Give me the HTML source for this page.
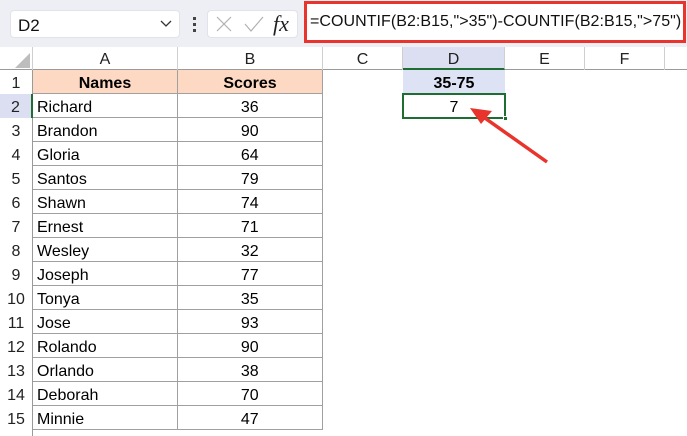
<!DOCTYPE html>
<html><head><style>
*{margin:0;padding:0;box-sizing:border-box}
body{width:687px;height:436px;overflow:hidden;background:#fff;font-family:"Liberation Sans",Calibri,sans-serif;position:relative}
.a{position:absolute}
.tb{left:0;top:0;width:687px;height:47px;background:#eeeef5}
.box{background:#fff;border:1px solid #e2e2ea;border-radius:4px}
.hdr{top:47px;height:23px;background:#fff;border-bottom:1px solid #9a9a9a;font-size:16px;color:#222;text-align:center;line-height:25px}
.ch{position:absolute;top:0;height:23px;border-right:1px solid #cfcfcf}
.rh{left:0;width:33px;height:24px;text-align:center;font-size:16px;line-height:27px;color:#222;border-right:1px solid #9a9a9a}
.c{height:24px;font-size:16px;line-height:27px;color:#000;border-right:1px solid #a0a0a0;border-bottom:1px solid #a0a0a0}
</style></head><body>
<div class="a tb"></div>
<div class="a box" style="left:10px;top:10px;width:170px;height:28px;font-size:17px;line-height:29px;padding-left:7px;color:#111">D2</div>
<svg class="a" style="left:160px;top:20px" width="12" height="8"><path d="M1 1 L6 6 L11 1" stroke="#333" stroke-width="1.3" fill="none"/></svg>
<div class="a" style="left:193px;top:17px;width:3px;height:3px;background:#444"></div>
<div class="a" style="left:193px;top:23px;width:3px;height:3px;background:#444"></div>
<div class="a" style="left:193px;top:29px;width:3px;height:3px;background:#444"></div>
<div class="a box" style="left:207px;top:10px;width:91px;height:28px"></div>
<svg class="a" style="left:215px;top:12px" width="80" height="26"><path d="M2 5 L16 19 M16 5 L2 19" stroke="#b0b0b0" stroke-width="1.2"/><path d="M30 12 L36 19 L48 5" stroke="#b0b0b0" stroke-width="1.2" fill="none"/><text x="58" y="19" font-family="Liberation Serif" font-style="italic" font-size="22" fill="#222">fx</text></svg>
<div class="a" style="left:304px;top:1px;width:382px;height:42px;border:3px solid #e8342c;background:#fff"></div>
<div class="a" style="left:310px;top:13px;font-size:16px;letter-spacing:0.05px;color:#111;white-space:nowrap">=COUNTIF(B2:B15,"&gt;35")-COUNTIF(B2:B15,"&gt;75")</div>
<div class="a hdr" style="left:0;width:687px">
<div class="ch" style="left:0;width:33px;border-right:1px solid #cfcfcf"><svg width="33" height="23"><path d="M30 6 L30 21 L15 21Z" fill="#bdbdbd"/></svg></div>
<div class="ch" style="left:33px;width:145px">A</div>
<div class="ch" style="left:178px;width:145px">B</div>
<div class="ch" style="left:323px;width:80px">C</div>
<div class="ch" style="left:403px;width:102px;background:#dcdff2;border-bottom:2px solid #1e6e34;height:23px">D</div>
<div class="ch" style="left:505px;width:80px">E</div>
<div class="ch" style="left:585px;width:80px">F</div>
</div>
<div class="a" style="left:0;top:70px;width:33px;height:366px;border-right:1px solid #9a9a9a"></div>
<div class="a rh" style="top:70px">1</div>
<div class="a rh" style="top:94px;background:#dcdff2;border-right:2px solid #1e6e34">2</div>
<div class="a rh" style="top:118px">3</div><div class="a rh" style="top:142px">4</div><div class="a rh" style="top:166px">5</div><div class="a rh" style="top:190px">6</div><div class="a rh" style="top:214px">7</div><div class="a rh" style="top:238px">8</div><div class="a rh" style="top:262px">9</div><div class="a rh" style="top:286px">10</div><div class="a rh" style="top:310px">11</div><div class="a rh" style="top:334px">12</div><div class="a rh" style="top:358px">13</div><div class="a rh" style="top:382px">14</div><div class="a rh" style="top:406px">15</div>
<div class="a c" style="left:33px;top:70px;width:145px;background:#fdd8c2;text-align:center;font-weight:bold">Names</div>
<div class="a c" style="left:178px;top:70px;width:145px;background:#fdd8c2;text-align:center;font-weight:bold">Scores</div>
<div class="a" style="left:33px;top:94px;width:290px">
<div class="c" style="display:flex"><span style="width:145px;padding-left:4px;border-right:1px solid #a0a0a0">Richard</span><span style="width:145px;text-align:center">36</span></div>
<div class="c" style="display:flex"><span style="width:145px;padding-left:4px;border-right:1px solid #a0a0a0">Brandon</span><span style="width:145px;text-align:center">90</span></div>
<div class="c" style="display:flex"><span style="width:145px;padding-left:4px;border-right:1px solid #a0a0a0">Gloria</span><span style="width:145px;text-align:center">64</span></div>
<div class="c" style="display:flex"><span style="width:145px;padding-left:4px;border-right:1px solid #a0a0a0">Santos</span><span style="width:145px;text-align:center">79</span></div>
<div class="c" style="display:flex"><span style="width:145px;padding-left:4px;border-right:1px solid #a0a0a0">Shawn</span><span style="width:145px;text-align:center">74</span></div>
<div class="c" style="display:flex"><span style="width:145px;padding-left:4px;border-right:1px solid #a0a0a0">Ernest</span><span style="width:145px;text-align:center">71</span></div>
<div class="c" style="display:flex"><span style="width:145px;padding-left:4px;border-right:1px solid #a0a0a0">Wesley</span><span style="width:145px;text-align:center">32</span></div>
<div class="c" style="display:flex"><span style="width:145px;padding-left:4px;border-right:1px solid #a0a0a0">Joseph</span><span style="width:145px;text-align:center">77</span></div>
<div class="c" style="display:flex"><span style="width:145px;padding-left:4px;border-right:1px solid #a0a0a0">Tonya</span><span style="width:145px;text-align:center">35</span></div>
<div class="c" style="display:flex"><span style="width:145px;padding-left:4px;border-right:1px solid #a0a0a0">Jose</span><span style="width:145px;text-align:center">93</span></div>
<div class="c" style="display:flex"><span style="width:145px;padding-left:4px;border-right:1px solid #a0a0a0">Rolando</span><span style="width:145px;text-align:center">90</span></div>
<div class="c" style="display:flex"><span style="width:145px;padding-left:4px;border-right:1px solid #a0a0a0">Orlando</span><span style="width:145px;text-align:center">38</span></div>
<div class="c" style="display:flex"><span style="width:145px;padding-left:4px;border-right:1px solid #a0a0a0">Deborah</span><span style="width:145px;text-align:center">70</span></div>
<div class="c" style="display:flex"><span style="width:145px;padding-left:4px;border-right:1px solid #a0a0a0">Minnie</span><span style="width:145px;text-align:center">47</span></div>
</div>
<div class="a" style="left:403px;top:70px;width:102px;height:24px;background:#dde3f4;text-align:center;font-weight:bold;font-size:16px;line-height:27px">35-75</div>
<div class="a" style="left:402px;top:93px;width:104px;height:26px;border:2px solid #1e6e34;text-align:center;font-size:16px;line-height:25px">7</div>
<div class="a" style="left:503px;top:116px;width:5px;height:5px;background:#1e6e34;border:1px solid #fff"></div>
<svg class="a" style="left:0;top:0" width="687" height="436"><path d="M547 162 L482 116" stroke="#e8342c" stroke-width="3.5" fill="none"/><path d="M470 108 L492 111 L481 124Z" fill="#e8342c"/></svg>
</body></html>
